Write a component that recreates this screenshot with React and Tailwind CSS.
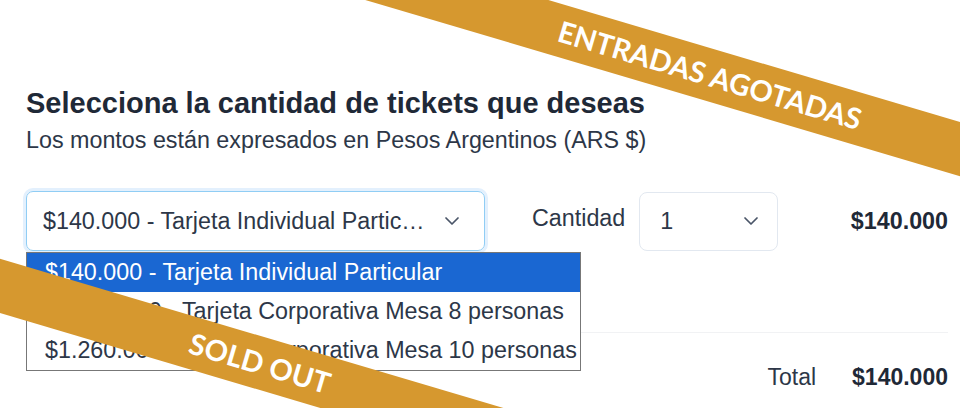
import { ChevronDown } from "lucide-react";

const options = [
    "$140.000 - Tarjeta Individual Particular",
    "$1.120.000 - Tarjeta Corporativa Mesa 8 personas",
    "$1.260.000 - Tarjeta Corporativa Mesa 10 personas",
];

function Ribbon({ className, children }) {
    return (
        <div
            className={`absolute h-[52px] bg-[#d6982f] rotate-[16.5deg] flex items-center justify-center text-white font-['Lato',sans-serif] font-bold text-[29px] ${className}`}
        >
            {children}
        </div>
    );
}

export default function App() {
    return (
        <div className="relative w-[960px] h-[408px] overflow-hidden bg-white font-['Liberation_Sans',Arial,sans-serif] text-[#2d3748]">
            <div className="pl-[26px] pr-[12px] pt-[86px]">
                {/* HEADER */}
                <h2 className="text-[29px] leading-[35px] font-bold text-[#1f2937]">
                    Selecciona la cantidad de tickets que deseas
                </h2>
                <p className="text-[23.3px] leading-[28px] mt-[5px]">
                    Los montos están expresados en Pesos Argentinos (ARS $)
                </p>

                {/* ROW */}
                <div className="flex items-center mt-[37px]">
                    <div className="w-[459px] h-[60px] border border-[#90cdf4] ring-[3px] ring-[#e3f0fd] rounded-[7px] flex items-center pl-[16px] pr-[20px] text-[23.3px]">
                        <span className="flex-1 truncate">$140.000 - Tarjeta Individual Particular</span>
                        <ChevronDown size={24} strokeWidth={1.75} className="text-[#4a5568] ml-[14px]" />
                    </div>

                    <span className="ml-[47px] text-[23.3px] self-start mt-[10px]">Cantidad</span>

                    <div className="ml-[14px] w-[139px] h-[59px] border border-[#e2e8f0] rounded-[8px] flex items-center justify-between pl-[20px] pr-[14px] text-[23.3px]">
                        <span>1</span>
                        <ChevronDown size={24} strokeWidth={1.75} className="text-[#4a5568]" />
                    </div>

                    <span className="ml-auto text-[23.3px] font-bold text-[#1f2937]">$140.000</span>
                </div>

                {/* TOTAL */}
                <div className="mt-[81px] border-t border-[#f1f2f4] flex justify-end items-center pt-[27px] text-[23px]">
                    <span>Total</span>
                    <span className="ml-[36px] font-bold text-[#1f2937]">$140.000</span>
                </div>
            </div>

            {/* DROPDOWN */}
            <ul className="absolute left-[26px] top-[252px] w-[555px] border border-[#777] bg-white text-[23.3px] text-[#2d3748]">
                {options.map((o, i) => (
                    <li
                        key={o}
                        className={`h-[39px] flex items-center pl-[18px] whitespace-nowrap ${
                            i === 0 ? "bg-[#1a67d2] text-white" : ""
                        }`}
                    >
                        {o}
                    </li>
                ))}
            </ul>

            {/* RIBBONS */}
            <Ribbon className="w-[1100px] left-[160px] top-[49px]">ENTRADAS AGOTADAS</Ribbon>
            <Ribbon className="w-[1000px] left-[-240px] top-[337px]">SOLD OUT</Ribbon>
        </div>
    );
}
